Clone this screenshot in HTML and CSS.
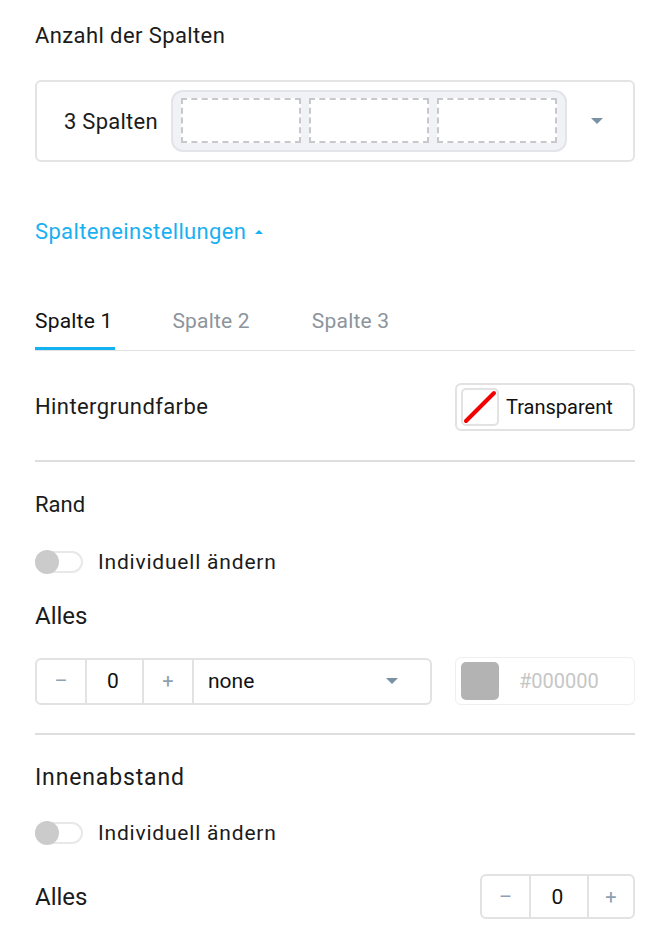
FILE: index.html
```html
<!DOCTYPE html>
<html lang="de">
<head>
<meta charset="utf-8">
<link rel="stylesheet" href="styles.css">
</head>
<body>
<div class="page">
  <div class="label title">Anzahl der Spalten</div>

  <div class="colselect">
    <span class="colselect-text">3 Spalten</span>
    <div class="preview">
      <div class="cell"></div>
      <div class="cell"></div>
      <div class="cell"></div>
    </div>
    <span class="caret"></span>
  </div>

  <div class="toggle-link">Spalteneinstellungen <span class="caret-up"></span></div>

  <div class="tabs">
    <div class="tab active">Spalte 1</div>
    <div class="tab">Spalte 2</div>
    <div class="tab">Spalte 3</div>
  </div>

  <div class="row bg-row">
    <span class="label wide">Hintergrundfarbe</span>
    <div class="color-btn">
      <span class="swatch transparent">
        <svg width="34" height="34" viewBox="0 0 34 34"><line x1="3" y1="31" x2="31" y2="3" stroke="#f40000" stroke-width="4" stroke-linecap="round"/></svg>
      </span>
      <span class="color-btn-text">Transparent</span>
    </div>
  </div>

  <div class="divider d1"></div>

  <div class="label sub r1">Rand</div>
  <div class="switch-row s1">
    <span class="switch"><span class="knob"></span></span>
    <span class="switch-text">Individuell ändern</span>
  </div>
  <div class="label big a1">Alles</div>

  <div class="row border-row">
    <div class="group">
      <span class="seg btn">&#8211;</span>
      <span class="seg val">0</span>
      <span class="seg btn plus">+</span>
      <span class="seg select"><span>none</span><span class="caret"></span></span>
    </div>
    <div class="color-input">
      <span class="swatch grey"></span>
      <span class="hex">#000000</span>
    </div>
  </div>

  <div class="divider d2"></div>

  <div class="label sub r2 spaced">Innenabstand</div>
  <div class="switch-row s2">
    <span class="switch"><span class="knob"></span></span>
    <span class="switch-text">Individuell ändern</span>
  </div>
  <div class="row pad-row">
    <span class="label big">Alles</span>
    <div class="group stepper">
      <span class="seg btn sm">&#8211;</span>
      <span class="seg val sv">0</span>
      <span class="seg btn plus sp">+</span>
    </div>
  </div>
</div>
</body>
</html>
```
FILE: styles.css
```css
* { box-sizing: border-box; }
html, body { margin: 0; padding: 0; background: #fff; }
body {
  font-family: Roboto, "Liberation Sans", Arial, sans-serif;
  color: #1b1b1b;
}
.page {
  width: 600px;
  margin-left: 35px;
  padding-top: 21px;
  display: flex;
  flex-direction: column;
}
.label { font-size: 22px; line-height: 30px; }
.label.big { font-size: 24px; }
.title, .wide { letter-spacing: 0.4px; }
.spaced { font-size: 23px; letter-spacing: 0.85px; }

.colselect {
  margin-top: 29px;
  height: 82px;
  border: 2px solid #e4e4e4;
  border-radius: 6px;
  display: flex;
  align-items: center;
  padding-left: 27px;
}
.colselect-text { font-size: 22px; width: 107px; letter-spacing: 0.25px; }
.preview {
  width: 396px;
  height: 62px;
  background: #f1f2f6;
  border: 2px solid #e3e4ea;
  border-radius: 12px;
  padding: 6px 8px 7px;
  display: flex;
  gap: 8px;
}
.cell {
  width: 120px;
  height: 45px;
  background: #fff;
  border: 2px dashed #c8c8cc;
}
.caret {
  width: 0; height: 0;
  border-left: 6px solid transparent;
  border-right: 6px solid transparent;
  border-top: 6px solid #7a91a3;
}
.colselect .caret { margin-left: 24px; }

.toggle-link {
  margin-top: 55px;
  font-size: 22px;
  line-height: 30px;
  color: #19b0f2;
  display: flex;
  align-items: center;
  letter-spacing: 0.35px;
}
.caret-up {
  width: 0; height: 0;
  margin-left: 9px;
  border-left: 4px solid transparent;
  border-right: 4px solid transparent;
  border-bottom: 4px solid #19b0f2;
}

.tabs {
  margin-top: 59px;
  display: flex;
  border-bottom: 1px solid #e2e2e2;
}
.tab {
  font-size: 21px;
  line-height: 30px;
  padding-bottom: 11px;
  border-bottom: 3px solid transparent;
  color: #8d949b;
  letter-spacing: 0.2px;
}
.tab:nth-child(2) { margin-left: 57px; }
.tab:nth-child(3) { margin-left: 62px; }
.tab.active { color: #111; border-bottom-color: #15b2f2; padding-right: 3px; }

.row { display: flex; align-items: center; justify-content: space-between; }
.bg-row { margin-top: 32px; }
.color-btn {
  width: 180px;
  height: 48px;
  border: 2px solid #e2e2e2;
  border-radius: 6px;
  padding: 4px;
  display: flex;
  align-items: center;
  gap: 7px;
}
.swatch {
  width: 38px; height: 38px;
  border-radius: 5px;
  display: block;
  flex: none;
}
.swatch.transparent { border: 2px solid #e2e2e2; }
.swatch.transparent svg { display: block; }
.color-btn-text { font-size: 20px; color: #111; }

.divider { height: 2px; background: #dedede; }
.d1 { margin-top: 29px; }
.d2 { margin-top: 28px; }
.r1, .r2 { margin-top: 28px; }

.switch-row { display: flex; align-items: center; gap: 15px; height: 30px; }
.s1 { margin-top: 27px; }
.s2 { margin-top: 25px; }
.switch {
  position: relative;
  width: 48px; height: 22px;
  border: 2px solid #e8e8e8;
  border-radius: 11px;
  display: block;
}
.knob {
  position: absolute;
  left: -2px; top: -3px;
  width: 24px; height: 24px;
  border-radius: 50%;
  background: #cbcbcb;
}
.switch-text { font-size: 21px; letter-spacing: 0.8px; }
.a1 { margin-top: 24px; }

.border-row { margin-top: 26px; }
.group {
  display: flex;
  height: 47px;
  border: 2px solid #e2e2e2;
  border-radius: 6px;
}
.seg {
  display: flex;
  align-items: center;
  justify-content: center;
  border-left: 2px solid #e2e2e2;
  font-size: 21px;
}
.seg:first-child { border-left: none; }
.seg.btn { width: 50px; color: #8fa1b1; font-size: 20px; }
.seg.btn:first-child { width: 48px; }
.seg.val { width: 57px; color: #111; padding-right: 3px; }
.seg.select {
  width: 238px;
  justify-content: space-between;
  padding: 0 32px 0 14px;
  color: #111;
}
.color-input {
  width: 180px;
  height: 48px;
  border: 1px solid #efefef;
  border-radius: 6px;
  padding: 4px 5px;
  display: flex;
  align-items: center;
  gap: 20px;
}
.swatch.grey { background: #b3b3b3; }
.hex { font-size: 20px; color: #c6c6c6; }

.pad-row { margin-top: 26px; }
.stepper { height: 45px; width: 155px; }
.stepper .sm { width: 46px; }
.stepper .sv { width: 58px; }
.stepper .sp { width: 47px; }
```
